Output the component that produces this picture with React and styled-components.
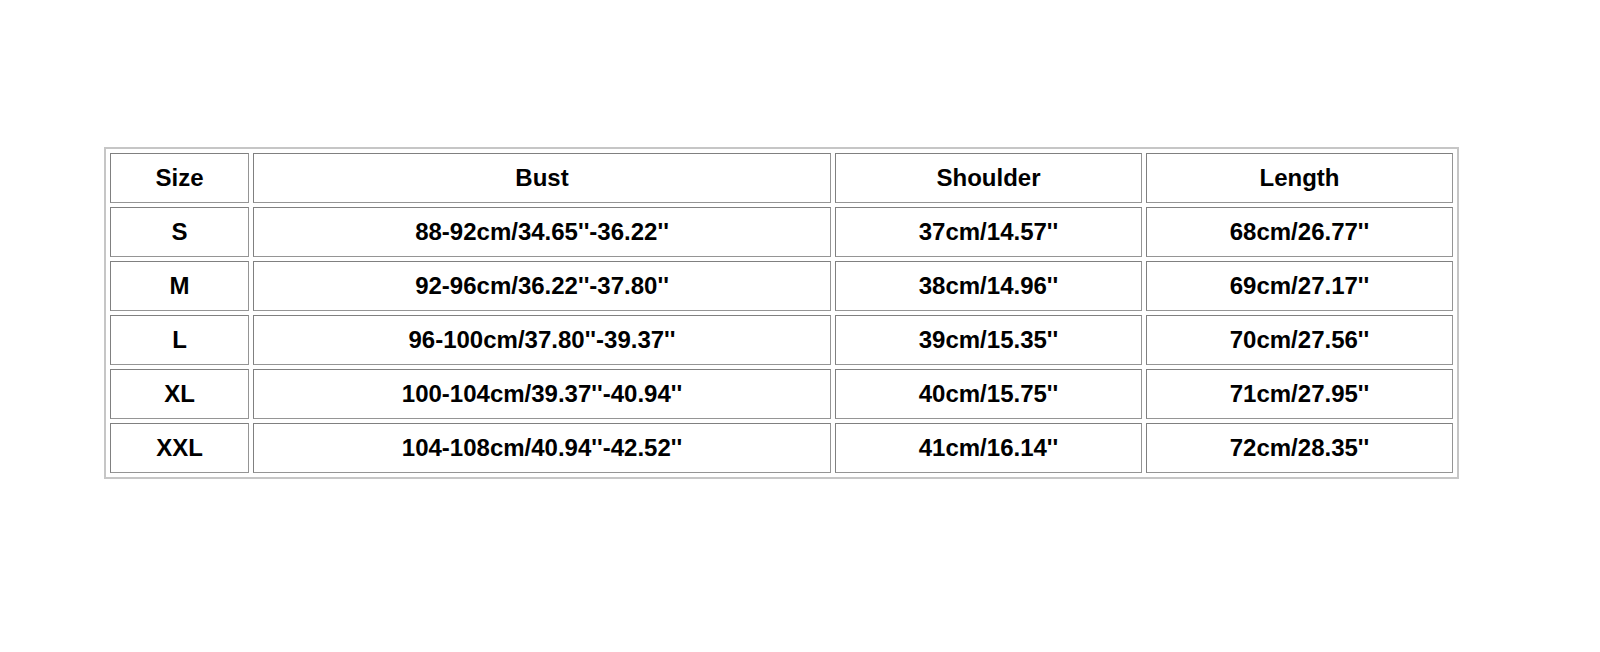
import React from "react";
import styled, { createGlobalStyle } from "styled-components";

const GlobalStyle = createGlobalStyle`
  html, body {
    margin: 0;
    padding: 0;
    background: #ffffff;
  }
`;

const Page = styled.div`
  width: 1600px;
  height: 652px;
  padding: 147px 0 0 104px;
  box-sizing: border-box;
`;

const Table = styled.table`
  width: 1351px;
  table-layout: fixed;
  border: 2px solid #c6c6c6;
  border-spacing: 4px;
  padding: 0;
  margin: 0;
  font-family: "Liberation Sans", Arial, sans-serif;
  font-weight: 700;
  font-size: 24px;
  color: #000;
`;

const Cell = styled.td`
  height: 48px;
  padding: 0;
  text-align: center;
  vertical-align: middle;
  border-top: 1px solid #808080;
  border-left: 1px solid #808080;
  border-right: 1px solid #959595;
  border-bottom: 1px solid #959595;
  white-space: nowrap;
`;

const header = ["Size", "Bust", "Shoulder", "Length"];
const rows = [
  ["S", "88-92cm/34.65''-36.22''", "37cm/14.57''", "68cm/26.77''"],
  ["M", "92-96cm/36.22''-37.80''", "38cm/14.96''", "69cm/27.17''"],
  ["L", "96-100cm/37.80''-39.37''", "39cm/15.35''", "70cm/27.56''"],
  ["XL", "100-104cm/39.37''-40.94''", "40cm/15.75''", "71cm/27.95''"],
  ["XXL", "104-108cm/40.94''-42.52''", "41cm/16.14''", "72cm/28.35''"],
];

const widths = [139, 578, 307, 307];

export default function App() {
  return (
    <>
      <GlobalStyle />
      <Page>
        <Table>
          <colgroup>
            {widths.map((w, i) => (
              <col key={i} style={{ width: w }} />
            ))}
          </colgroup>
          <tbody>
            <tr>
              {header.map((h) => (
                <Cell key={h}>{h}</Cell>
              ))}
            </tr>
            {rows.map((r) => (
              <tr key={r[0]}>
                {r.map((c, i) => (
                  <Cell key={i}>{c}</Cell>
                ))}
              </tr>
            ))}
          </tbody>
        </Table>
      </Page>
    </>
  );
}
